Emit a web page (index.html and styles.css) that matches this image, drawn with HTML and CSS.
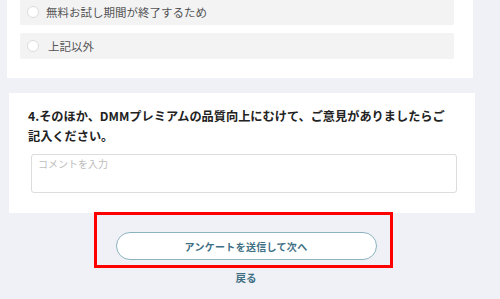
FILE: index.html
```html
<!DOCTYPE html>
<html lang="ja">
<head>
<meta charset="utf-8">
<title>アンケート</title>
<link rel="stylesheet" href="styles.css">
</head>
<body>
<main class="page">
  <section class="card card-options">
    <label class="option"><span class="radio"></span><span class="option-text">無料お試し期間が終了するため</span></label>
    <label class="option"><span class="radio"></span><span class="option-text">上記以外</span></label>
  </section>
  <section class="card card-question">
    <h2 class="question">4.そのほか、DMMプレミアムの品質向上にむけて、ご意見がありましたらご記入ください。</h2>
    <div class="comment">コメントを入力</div>
  </section>
  <div class="actions">
    <div class="highlight">
      <button class="submit" type="button">アンケートを送信して次へ</button>
    </div>
    <a class="back" href="#">戻る</a>
  </div>
</main>
</body>
</html>
```
FILE: styles.css
```css
* { box-sizing: border-box; }
html, body { margin: 0; padding: 0; }
body {
  width: 500px;
  height: 299px;
  overflow: hidden;
  background: #eff1f6;
  font-family: "Noto Sans CJK JP", "Noto Sans", sans-serif;
}
.page {
  display: flex;
  flex-direction: column;
  margin-top: -20px;
}
.card {
  background: #ffffff;
}
.card-options {
  margin-left: 7px;
  width: 466px;
  padding: 0 19px 19px 13px;
  display: flex;
  flex-direction: column;
  gap: 8px;
}
.option {
  display: flex;
  align-items: center;
  height: 26px;
  background: #f3f3f4;
  border-radius: 2px;
  padding-left: 7px;
  gap: 7px;
  color: #555;
  font-size: 11.5px;
}
.option:first-child { height: 45px; padding-top: 19px; }
.option:last-child .option-text { margin-left: 2px; }
.radio {
  width: 12px;
  height: 12px;
  border-radius: 50%;
  background: #fff;
  border: 1px solid #dcdcdc;
  flex: none;
}
.card-question {
  margin-top: 15px;
  margin-left: 9px;
  width: 466px;
  padding: 13px 18px 20px 19px;
}
.question {
  margin: 0 8px 0 0;
  font-size: 12.2px;
  line-height: 20px;
  font-weight: bold;
  color: #222;
  letter-spacing: 0;
}
.comment {
  margin: 8px 0 0 3px;
  height: 39px;
  border: 1px solid #dcdcdc;
  border-radius: 3px;
  padding: 3px 6px;
  font-size: 10px;
  line-height: 12px;
  color: #bdbdbd;
}
.actions {
  display: flex;
  flex-direction: column;
  align-items: center;
  margin-top: -1px;
  padding-right: 8px;
}
.highlight {
  margin-left: -6px;
  width: 299px;
  height: 56px;
  border: 3px solid #ff0000;
  padding: 17px 13px 0 19px;
}
.submit {
  display: block;
  width: 261px;
  height: 28px;
  border: 1px solid #8db2bf;
  border-radius: 14px;
  background: #fff;
  color: #3f6f84;
  font-family: inherit;
  font-weight: bold;
  font-size: 10px;
  letter-spacing: 0.3px;
  padding: 0;
}
.back {
  margin-top: 3px;
  color: #3f6f84;
  font-weight: bold;
  font-size: 10.5px;
  line-height: 14px;
  text-decoration: none;
}
```
